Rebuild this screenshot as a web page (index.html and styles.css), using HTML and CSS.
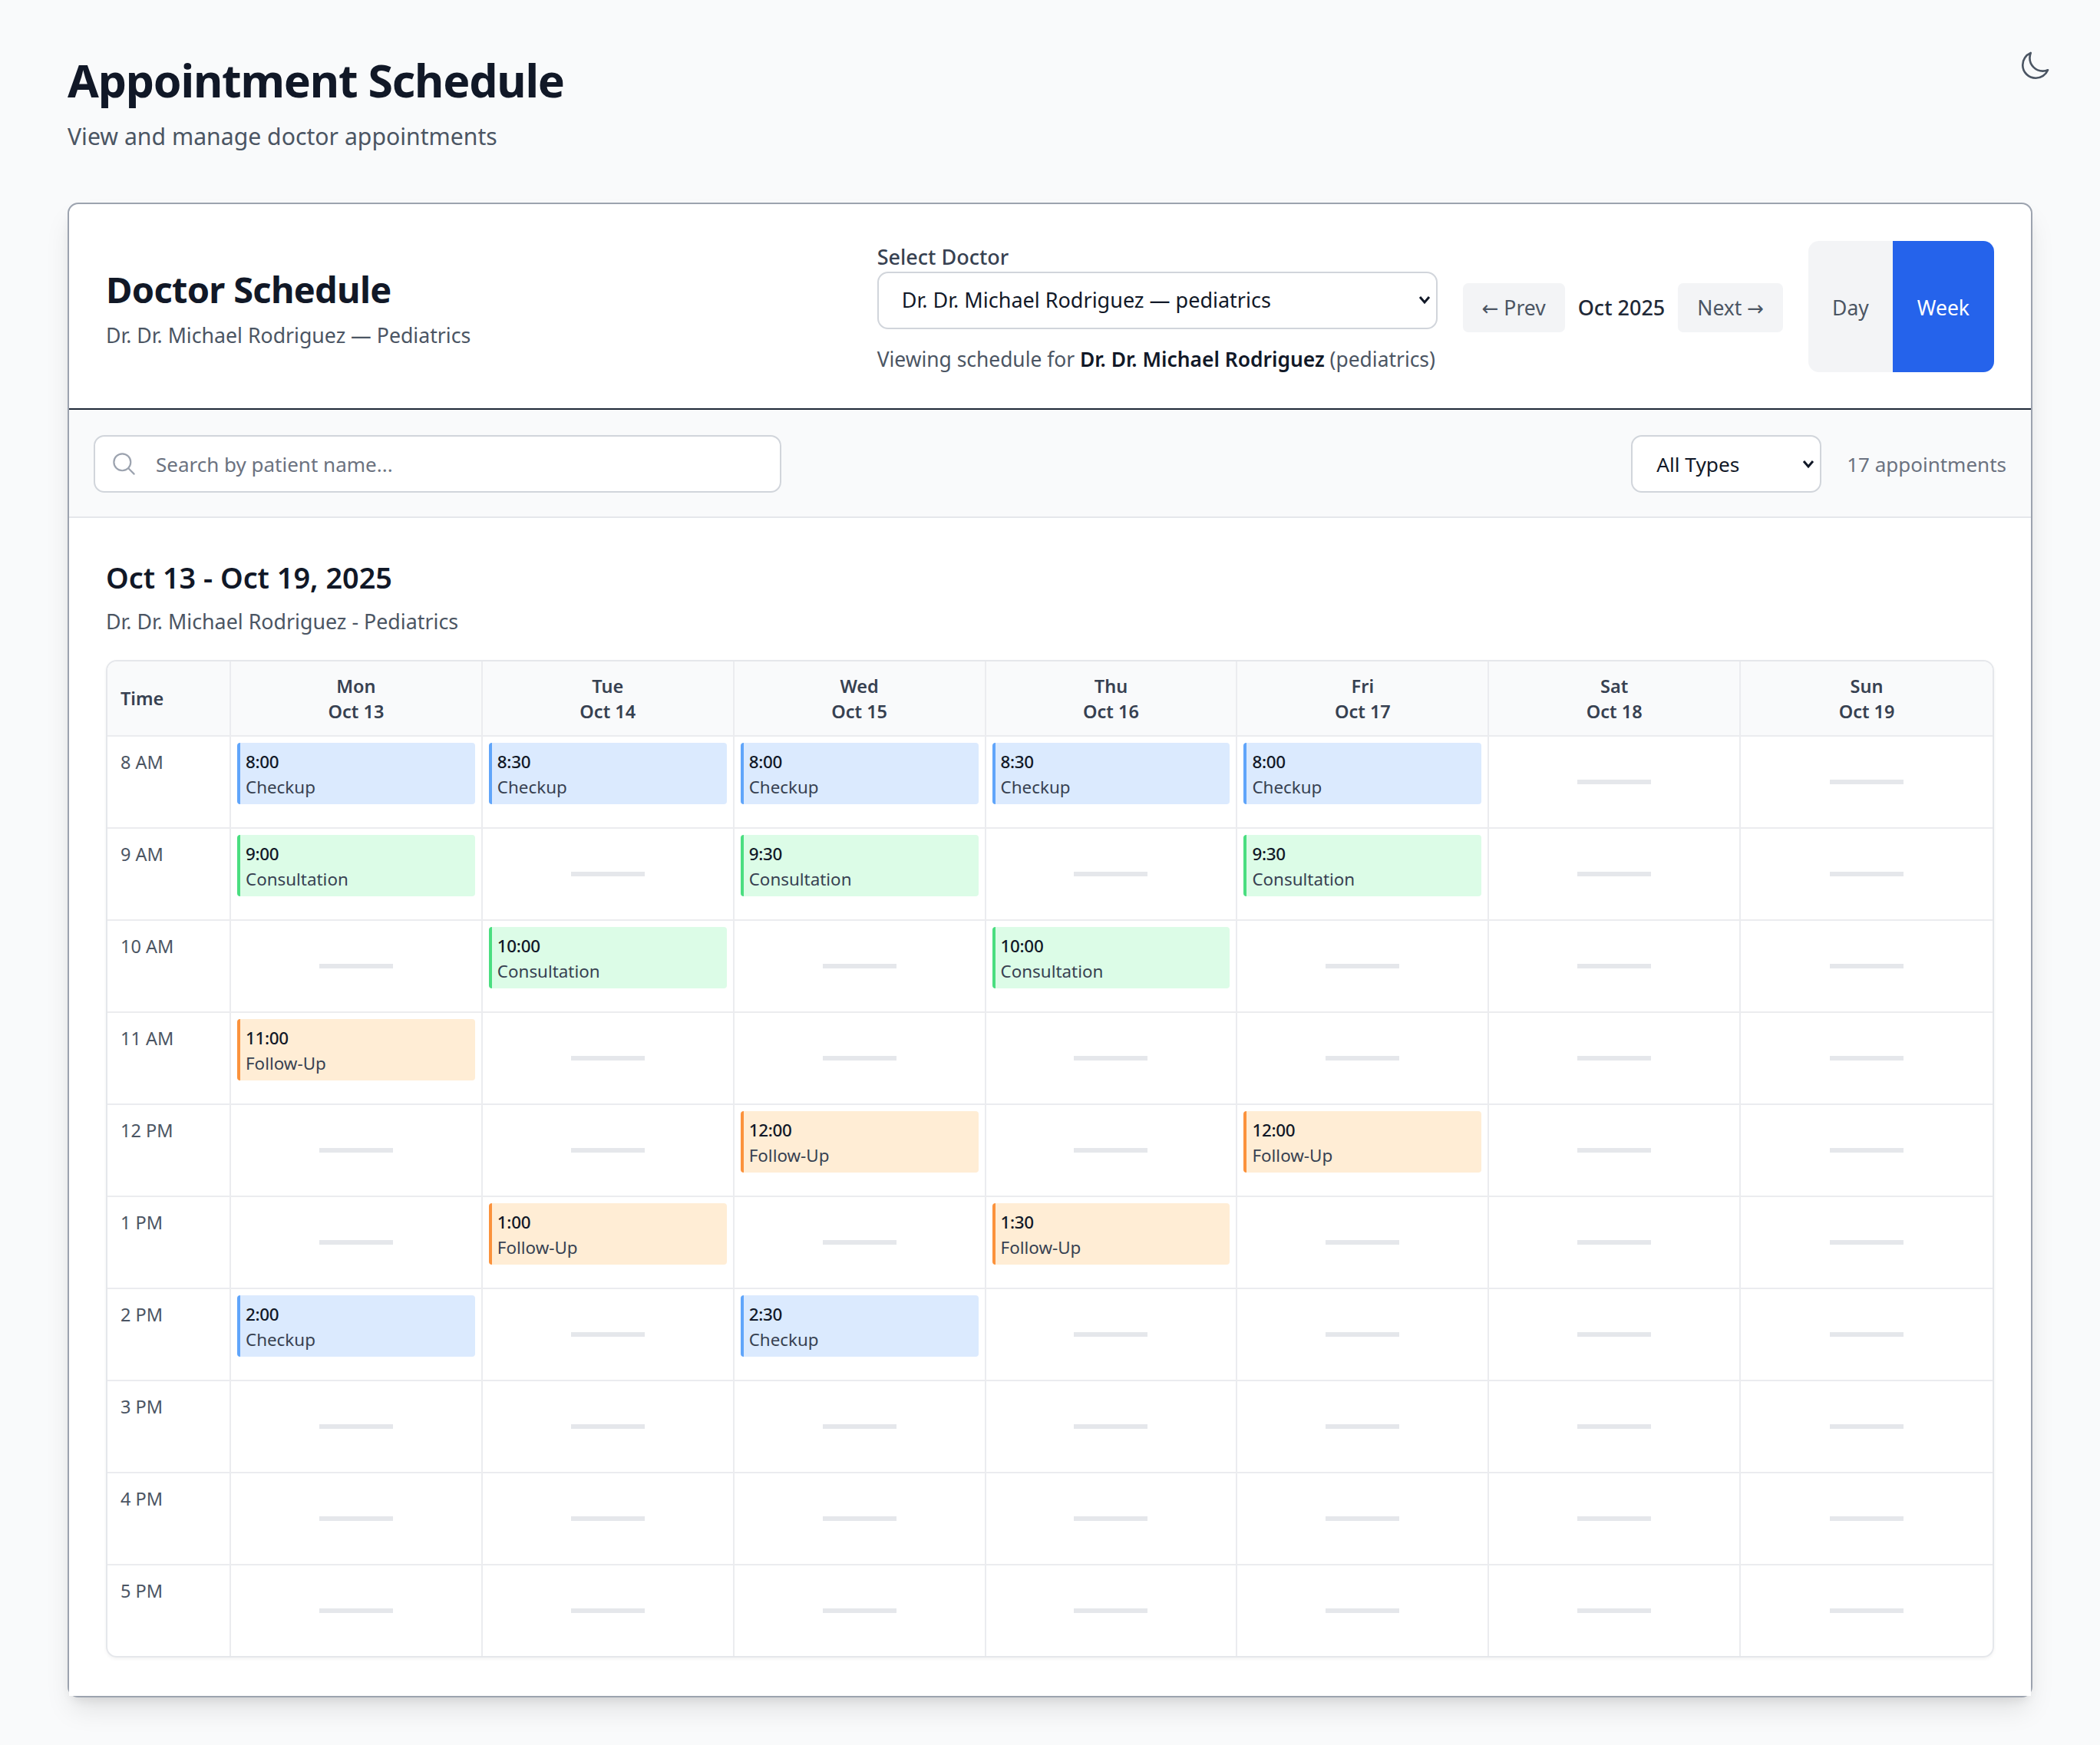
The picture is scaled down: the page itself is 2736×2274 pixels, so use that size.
FILE: index.html
```html
<!DOCTYPE html>
<html lang="en">
<head>
    <meta charset="UTF-8">
    <meta name="viewport" content="width=device-width, initial-scale=1.0">
    <title>Appointment Schedule</title>
    <link rel="stylesheet" href="styles.css">
</head>
<body>
    <button class="theme-toggle" aria-label="Toggle theme">
        <svg width="42" height="42" viewBox="0 0 24 24" fill="none" stroke="currentColor" stroke-width="1.5" stroke-linecap="round" stroke-linejoin="round"><path d="M21.752 15.002A9.72 9.72 0 0 1 18 15.75c-5.385 0-9.75-4.365-9.75-9.75 0-1.33.266-2.597.748-3.752A9.753 9.753 0 0 0 3 11.25C3 16.635 7.365 21 12.75 21a9.753 9.753 0 0 0 9.002-5.998Z"/></svg>
    </button>

    <header class="page-head">
        <h1>Appointment Schedule</h1>
        <p>View and manage doctor appointments</p>
    </header>

    <main class="card">
        <section class="card-head">
            <div class="doctor-info">
                <h2>Doctor Schedule</h2>
                <p>Dr. Dr. Michael Rodriguez — Pediatrics</p>
            </div>
            <div class="controls">
                <div class="doctor-select">
                    <label for="doctor">Select Doctor</label>
                    <select id="doctor" class="field">
                        <option>Dr. Dr. Michael Rodriguez — pediatrics</option>
                    </select>
                    <p>Viewing schedule for <strong>Dr. Dr. Michael Rodriguez</strong> (pediatrics)</p>
                </div>
                <div class="month-nav">
                    <button class="nav-btn"><span class="arrow">←</span> Prev</button>
                    <span class="month">Oct 2025</span>
                    <button class="nav-btn">Next <span class="arrow">→</span></button>
                </div>
                <div class="view-switch">
                    <button class="view-btn">Day</button>
                    <button class="view-btn active">Week</button>
                </div>
            </div>
        </section>

        <section class="toolbar">
            <div class="search">
                <svg width="35" height="35" viewBox="0 0 24 24" fill="none" stroke="currentColor" stroke-width="1.5" stroke-linecap="round" stroke-linejoin="round"><path d="M21 21l-5.197-5.197m0 0A7.5 7.5 0 1 0 5.196 5.196a7.5 7.5 0 0 0 10.607 10.607Z"/></svg>
                <span>Search by patient name...</span>
            </div>
            <div class="filter">
                <select class="field type-select">
                    <option>All Types</option>
                </select>
                <span class="count">17 appointments</span>
            </div>
        </section>

        <section class="week">
            <h3>Oct 13 - Oct 19, 2025</h3>
            <p class="week-sub">Dr. Dr. Michael Rodriguez - Pediatrics</p>

            <div class="grid">
                <div class="th time-th">Time</div>
                <div class="th">Mon<br>Oct 13</div>
                <div class="th">Tue<br>Oct 14</div>
                <div class="th">Wed<br>Oct 15</div>
                <div class="th">Thu<br>Oct 16</div>
                <div class="th">Fri<br>Oct 17</div>
                <div class="th">Sat<br>Oct 18</div>
                <div class="th">Sun<br>Oct 19</div>

                <div class="hour">8 AM</div>
                <div class="cell"><div class="appt checkup"><b>8:00</b><span>Checkup</span></div></div>
                <div class="cell"><div class="appt checkup"><b>8:30</b><span>Checkup</span></div></div>
                <div class="cell"><div class="appt checkup"><b>8:00</b><span>Checkup</span></div></div>
                <div class="cell"><div class="appt checkup"><b>8:30</b><span>Checkup</span></div></div>
                <div class="cell"><div class="appt checkup"><b>8:00</b><span>Checkup</span></div></div>
                <div class="cell"><i class="empty"></i></div>
                <div class="cell"><i class="empty"></i></div>

                <div class="hour">9 AM</div>
                <div class="cell"><div class="appt consult"><b>9:00</b><span>Consultation</span></div></div>
                <div class="cell"><i class="empty"></i></div>
                <div class="cell"><div class="appt consult"><b>9:30</b><span>Consultation</span></div></div>
                <div class="cell"><i class="empty"></i></div>
                <div class="cell"><div class="appt consult"><b>9:30</b><span>Consultation</span></div></div>
                <div class="cell"><i class="empty"></i></div>
                <div class="cell"><i class="empty"></i></div>

                <div class="hour">10 AM</div>
                <div class="cell"><i class="empty"></i></div>
                <div class="cell"><div class="appt consult"><b>10:00</b><span>Consultation</span></div></div>
                <div class="cell"><i class="empty"></i></div>
                <div class="cell"><div class="appt consult"><b>10:00</b><span>Consultation</span></div></div>
                <div class="cell"><i class="empty"></i></div>
                <div class="cell"><i class="empty"></i></div>
                <div class="cell"><i class="empty"></i></div>

                <div class="hour">11 AM</div>
                <div class="cell"><div class="appt follow"><b>11:00</b><span>Follow-Up</span></div></div>
                <div class="cell"><i class="empty"></i></div>
                <div class="cell"><i class="empty"></i></div>
                <div class="cell"><i class="empty"></i></div>
                <div class="cell"><i class="empty"></i></div>
                <div class="cell"><i class="empty"></i></div>
                <div class="cell"><i class="empty"></i></div>

                <div class="hour">12 PM</div>
                <div class="cell"><i class="empty"></i></div>
                <div class="cell"><i class="empty"></i></div>
                <div class="cell"><div class="appt follow"><b>12:00</b><span>Follow-Up</span></div></div>
                <div class="cell"><i class="empty"></i></div>
                <div class="cell"><div class="appt follow"><b>12:00</b><span>Follow-Up</span></div></div>
                <div class="cell"><i class="empty"></i></div>
                <div class="cell"><i class="empty"></i></div>

                <div class="hour">1 PM</div>
                <div class="cell"><i class="empty"></i></div>
                <div class="cell"><div class="appt follow"><b>1:00</b><span>Follow-Up</span></div></div>
                <div class="cell"><i class="empty"></i></div>
                <div class="cell"><div class="appt follow"><b>1:30</b><span>Follow-Up</span></div></div>
                <div class="cell"><i class="empty"></i></div>
                <div class="cell"><i class="empty"></i></div>
                <div class="cell"><i class="empty"></i></div>

                <div class="hour">2 PM</div>
                <div class="cell"><div class="appt checkup"><b>2:00</b><span>Checkup</span></div></div>
                <div class="cell"><i class="empty"></i></div>
                <div class="cell"><div class="appt checkup"><b>2:30</b><span>Checkup</span></div></div>
                <div class="cell"><i class="empty"></i></div>
                <div class="cell"><i class="empty"></i></div>
                <div class="cell"><i class="empty"></i></div>
                <div class="cell"><i class="empty"></i></div>

                <div class="hour">3 PM</div>
                <div class="cell"><i class="empty"></i></div>
                <div class="cell"><i class="empty"></i></div>
                <div class="cell"><i class="empty"></i></div>
                <div class="cell"><i class="empty"></i></div>
                <div class="cell"><i class="empty"></i></div>
                <div class="cell"><i class="empty"></i></div>
                <div class="cell"><i class="empty"></i></div>

                <div class="hour">4 PM</div>
                <div class="cell"><i class="empty"></i></div>
                <div class="cell"><i class="empty"></i></div>
                <div class="cell"><i class="empty"></i></div>
                <div class="cell"><i class="empty"></i></div>
                <div class="cell"><i class="empty"></i></div>
                <div class="cell"><i class="empty"></i></div>
                <div class="cell"><i class="empty"></i></div>

                <div class="hour">5 PM</div>
                <div class="cell"><i class="empty"></i></div>
                <div class="cell"><i class="empty"></i></div>
                <div class="cell"><i class="empty"></i></div>
                <div class="cell"><i class="empty"></i></div>
                <div class="cell"><i class="empty"></i></div>
                <div class="cell"><i class="empty"></i></div>
                <div class="cell"><i class="empty"></i></div>
            </div>
        </section>
    </main>
</body>
</html>
```

FILE: styles.css
```css
/* Page */
* {
    box-sizing: border-box;
}

body {
    position: relative;
    margin: 0;
    padding: 64px 88px 64px;
    min-height: 2274px;
    background: #f9fafb;
    color: #111827;
    font-family: "Noto Sans", "Open Sans", sans-serif;
    font-size: 27px;
    line-height: 42px;
}

button {
    font: inherit;
    border: 0;
}

h1, h2, h3, p {
    margin: 0;
}

.theme-toggle {
    position: absolute;
    top: 65px;
    right: 64px;
    padding: 0;
    background: none;
    color: #4b5563;
}

/* Title */
.page-head {
    height: 200px;
}

.page-head h1 {
    font-size: 59px;
    line-height: 80px;
    font-weight: 700;
    letter-spacing: -1.2px;
}

.page-head p {
    margin-top: 13px;
    font-size: 30.2px;
    color: #4b5563;
}

/* Card */
.card {
    border: 2px solid #9ca3af;
    border-radius: 14px;
    background: #fff;
    box-shadow: 0 20px 35px -5px rgba(0, 0, 0, 0.1), 0 8px 14px -6px rgba(0, 0, 0, 0.1);
}

.card-head {
    display: flex;
    justify-content: space-between;
    align-items: center;
    height: 268px;
    padding: 0 48px;
    border-bottom: 2px solid #1f2937;
}

.doctor-info {
    padding-top: 6px;
}

.doctor-info h2 {
    font-size: 47px;
    line-height: 60px;
    font-weight: 700;
    letter-spacing: -0.7px;
}

.doctor-info p {
    margin-top: 9px;
    font-size: 26.7px;
    color: #4b5563;
}

.controls {
    display: flex;
    align-items: center;
    gap: 33px;
}

.doctor-select {
    width: 730px;
    padding-top: 3px;
}

.doctor-select label {
    display: block;
    height: 41px;
    line-height: 44px;
    font-weight: 500;
    color: #374151;
}

.doctor-select p {
    margin-top: 18px;
    font-size: 26.4px;
    color: #4b5563;
    white-space: nowrap;
}

.doctor-select strong {
    color: #111827;
    font-weight: 600;
}

.field {
    display: block;
    width: 730px;
    height: 75px;
    padding: 0 30px;
    border: 2px solid #d1d5db;
    border-radius: 14px;
    color: #111827;
    font: inherit;
    appearance: none;
    background: #fff url("data:image/svg+xml,%3Csvg xmlns='http://www.w3.org/2000/svg' viewBox='0 0 16 12'%3E%3Cpath d='M2 2l6 7 6-7' fill='none' stroke='%23111827' stroke-width='3'/%3E%3C/svg%3E") no-repeat right 7px center / 16px 12px;
}

.month-nav {
    display: flex;
    align-items: center;
    gap: 17px;
    padding-top: 3px;
}

.nav-btn {
    height: 64px;
    padding: 2px 25px 0;
    border-radius: 7px;
    background: #f3f4f6;
    color: #4b5563;
    font-size: 26.5px;
}

.arrow {
    font-family: "DejaVu Sans", sans-serif;
    font-size: 26px;
}

.month {
    font-weight: 500;
    color: #1f2937;
}

.view-switch {
    display: flex;
    height: 171px;
    border-radius: 14px;
    overflow: hidden;
}

.view-btn {
    padding: 3px 31px 0;
    background: #f3f4f6;
    color: #4b5563;
    font-size: 26.5px;
}

.view-btn.active {
    padding: 3px 32px 0;
    background: #2563eb;
    color: #fff;
}

/* Search and filter */
.toolbar {
    display: flex;
    justify-content: space-between;
    align-items: center;
    height: 141px;
    padding: 2px 32px 0;
    background: #f9fafb;
    border-bottom: 2px solid #e5e7eb;
}

.search {
    display: flex;
    align-items: center;
    gap: 24px;
    width: 896px;
    height: 75px;
    padding: 0 20px;
    border: 2px solid #d1d5db;
    border-radius: 14px;
    background: #fff;
    color: #9ca3af;
    font-size: 26px;
}

.search span {
    color: #6b7280;
}

.filter {
    display: flex;
    align-items: center;
    gap: 33px;
}

.type-select {
    width: 248px;
    padding-left: 31px;
    font-size: 26.3px;
}

.count {
    font-size: 26px;
    color: #6b7280;
}

/* Week grid */
.week {
    padding: 48px 48px 50px;
    background: #fff;
}

.week h3 {
    font-size: 37.8px;
    line-height: 60px;
    font-weight: 600;
}

.week-sub {
    margin-top: 6px;
    font-size: 26.8px;
    color: #4b5563;
}

.grid {
    display: grid;
    grid-template-columns: 161px repeat(7, 1fr);
    grid-template-rows: 98px repeat(9, 120px) 118px;
    margin-top: 29px;
    border: 2px solid #e5e7eb;
    border-radius: 14px;
    overflow: hidden;
    box-shadow: 0 2px 4px rgba(0, 0, 0, 0.05);
    font-size: 23.5px;
    line-height: 33px;
}

.th {
    padding-top: 16px;
    text-align: center;
    font-weight: 600;
    color: #374151;
    background: #f9fafb;
    border-right: 2px solid #ebecef;
    border-bottom: 2px solid #ebecef;
}

.time-th {
    padding: 32px 0 0 17px;
    text-align: left;
}

.th:nth-child(8) {
    border-right: 0;
}

.hour {
    padding: 17px 0 0 17px;
    color: #4b5563;
    border-right: 2px solid #ebecef;
    border-bottom: 2px solid #ebecef;
}

.cell {
    display: flex;
    flex-direction: column;
    justify-content: center;
    align-items: center;
    border-right: 2px solid #ebecef;
    border-bottom: 2px solid #ebecef;
}

.cell:nth-child(8n) {
    border-right: 0;
}

.hour:nth-last-child(8),
.cell:nth-last-child(-n+7) {
    border-bottom: 0;
}

.cell:has(.appt) {
    justify-content: flex-start;
    padding: 8px 8px 0;
}

.empty {
    display: block;
    width: 96px;
    height: 6px;
    background: #e5e7eb;
}

.appt {
    display: flex;
    flex-direction: column;
    width: 100%;
    height: 80px;
    padding: 8px 8px 8px 7px;
    border-left: 4px solid;
    border-radius: 4px;
    font-size: 22.4px;
    color: #374151;
}

.appt b {
    font-weight: 500;
    letter-spacing: -0.3px;
    color: #111827;
}

.checkup {
    background: #dbeafe;
    border-color: #60a5fa;
}

.consult {
    background: #dcfce7;
    border-color: #4ade80;
}

.follow {
    background: #ffedd5;
    border-color: #fb923c;
}
```
